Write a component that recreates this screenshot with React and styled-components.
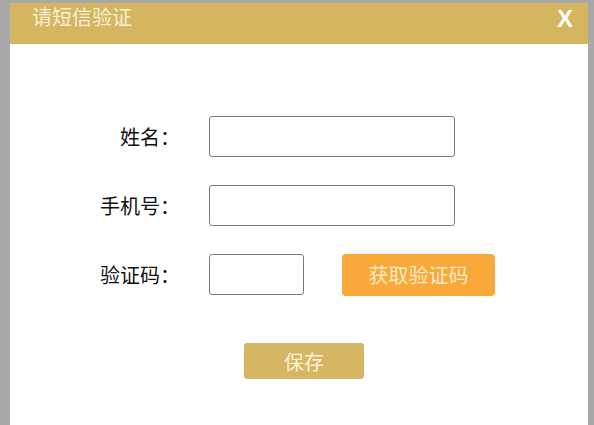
import styled, { createGlobalStyle } from "styled-components";

const GlobalStyle = createGlobalStyle`
  html, body {
    margin: 0;
    padding: 0;
    background: #a8a8a8;
    overflow: hidden;
  }
  body {
    font-family: "Noto Sans CJK SC", "Noto Sans", sans-serif;
  }
`;

export default function App() {
  return (
    <>
      <GlobalStyle />
      <Page>
        <Modal>
          <Header>
            <Title>请短信验证</Title>
            <Close>X</Close>
          </Header>
          <Body>
            <Form>
              <Label>姓名：</Label>
              <Input type="text" />
              <Label>手机号：</Label>
              <Input type="text" />
              <Label>验证码：</Label>
              <CodeRow>
                <Input type="text" $small />
                <CodeButton type="button">获取验证码</CodeButton>
              </CodeRow>
            </Form>
            <SaveButton type="button">保存</SaveButton>
          </Body>
        </Modal>
      </Page>
    </>
  );
}

const Page = styled.div`
  height: 425px;
  padding: 3px 6px 0 10px;
  box-sizing: border-box;
`;

const Modal = styled.div`
  width: 578px;
  height: 422px;
  background: #ffffff;
  display: flex;
  flex-direction: column;
`;

const Header = styled.div`
  height: 41px;
  background: #d5b55f;
  display: flex;
  justify-content: space-between;
  align-items: flex-start;
  padding: 0 15px 0 22px;
`;

const Title = styled.span`
  font-size: 20px;
  line-height: 28px;
  color: #f7f0d8;
`;

const Close = styled.span`
  font-family: "Liberation Sans", Arial, sans-serif;
  font-weight: bold;
  font-size: 24px;
  line-height: 28px;
  margin-top: 2px;
  color: #ffffff;
  cursor: pointer;
`;

const Body = styled.div`
  padding-top: 72px;
  display: flex;
  flex-direction: column;
`;

const Form = styled.div`
  display: grid;
  grid-template-columns: 170px 246px;
  grid-auto-rows: 41px;
  column-gap: 29px;
  row-gap: 28px;
  align-items: center;
`;

const Label = styled.label`
  text-align: right;
  font-size: 20px;
  color: #111111;
`;

const Input = styled.input`
  width: ${(p) => (p.$small ? "95px" : "246px")};
  height: 41px;
  box-sizing: border-box;
  border: 1px solid #7a7a7a;
  border-radius: 3px;
  background: #ffffff;
  outline: none;
  padding: 0 8px;
  font-size: 16px;
`;

const CodeRow = styled.div`
  display: flex;
  align-items: center;
  gap: 38px;
`;

const CodeButton = styled.button`
  width: 153px;
  height: 42px;
  border: none;
  border-radius: 4px;
  background: #f9a83a;
  color: #fdebc6;
  font-family: "Noto Sans CJK SC", sans-serif;
  font-size: 20px;
  padding: 0;
  flex-shrink: 0;
`;

const SaveButton = styled.button`
  align-self: flex-start;
  margin: 48px 0 0 234px;
  width: 120px;
  height: 36px;
  border: none;
  border-radius: 3px;
  background: #d6b662;
  color: #fbf3dc;
  font-family: "Noto Sans CJK SC", sans-serif;
  font-size: 20px;
  padding: 0;
`;
